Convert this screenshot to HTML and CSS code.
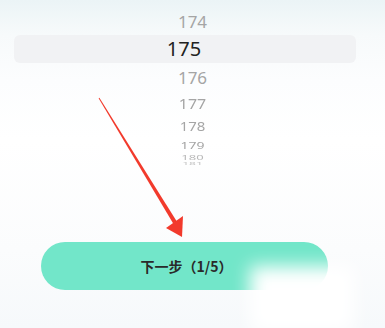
FILE: index.html
```html
<!DOCTYPE html>
<html lang="zh-CN">
<head>
<meta charset="utf-8">
<link rel="stylesheet" href="styles.css">
</head>
<body>
<div class="page">
  <div class="picker">
    <div class="row r0"><span>173</span></div>
    <div class="row r1"><span>174</span></div>
    <div class="row r2 selected"><span>175</span></div>
    <div class="row r3"><span>176</span></div>
    <div class="row r4"><span>177</span></div>
    <div class="row r5"><span>178</span></div>
    <div class="row r6"><span>179</span></div>
    <div class="row r7"><span>180</span></div>
    <div class="row r8"><span>181</span></div>
  </div>
  <div class="footer">
    <button class="next">下一步（1/5）</button>
  </div>
  <svg class="arrow" width="385" height="328" viewBox="0 0 385 328">
    <polygon points="98.6,98.2 99.4,97.8 176.8,221.5 173.2,223.5" fill="#f23a2c"/>
    <polygon points="182,237 166,228 183,216" fill="#f23a2c"/>
  </svg>
  <div class="watermark"></div>
</div>
</body>
</html>
```
FILE: styles.css
```css
html, body {
  margin: 0;
  padding: 0;
}
body {
  font-family: "Noto Sans", "Noto Sans CJK SC", sans-serif;
}
.page {
  position: relative;
  width: 385px;
  height: 328px;
  overflow: hidden;
  background: linear-gradient(180deg, #ebf4f6 0px, #f7fafb 35px, #fcfdfe 80px, #ffffff 140px, #fbfcfd 250px, #f6f9fb 328px);
  display: flex;
  flex-direction: column;
}
.picker {
  display: flex;
  flex-direction: column;
  margin-top: -21px;
}
.row {
  display: flex;
  align-items: center;
  justify-content: center;
  overflow: hidden;
  color: #a5a5a5;
  font-size: 17px;
}
.row span {
  display: block;
  line-height: 1;
}
.r0 { height: 28px; }
.r1 { height: 28px; }
.r2 {
  height: 28px;
  margin: 0 29px 0 14px;
  background: #f1f2f4;
  border-radius: 6px;
  color: #222222;
  font-size: 20px;
}
.r2 span { transform: translateX(-1px); }
.r3 { height: 28px; font-size: 17px; }
.r4 { height: 24px; font-size: 16px; }
.r4 span { transform: scaleY(0.95); }
.r5 { height: 22px; font-size: 15px; }
.r5 span { transform: scaleY(0.85); }
.r6 { height: 15px; font-size: 14px; }
.r6 span { transform: scaleY(0.7); }
.r7 { height: 10px; font-size: 13px; color: #b8b8b8; }
.r7 span { transform: scaleY(0.5); }
.r8 { height: 5px; font-size: 12px; color: #c8c8c8; align-items: flex-start; }
.r8 span { transform: scaleY(0.3); transform-origin: top; }
.footer {
  margin-top: 75px;
  display: flex;
  padding-left: 41px;
}
.next {
  width: 287px;
  height: 48px;
  border: none;
  border-radius: 24px;
  background: #72e6c9;
  color: #2a2a2a;
  font-family: "Noto Sans CJK SC", "Noto Sans", sans-serif;
  font-size: 14px;
  font-weight: 600;
  padding: 0;
  text-indent: 4px;
}
.arrow {
  position: absolute;
  left: 0;
  top: 0;
}
.watermark {
  position: absolute;
  left: 250px;
  top: 266px;
  width: 104px;
  height: 66px;
  background: #ffffff;
  filter: blur(9px);
}
```
